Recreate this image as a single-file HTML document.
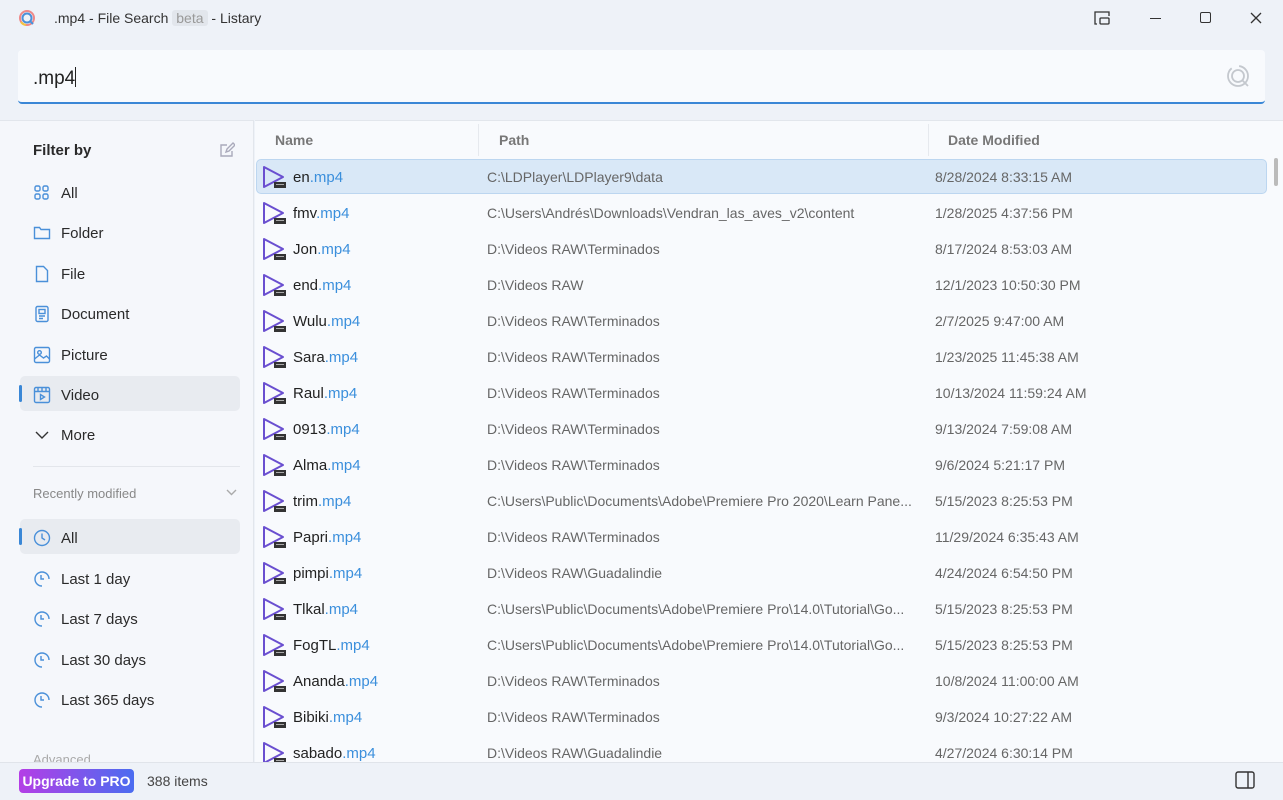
<!DOCTYPE html>
<html><head><meta charset="utf-8"><style>
*{box-sizing:border-box;margin:0;padding:0}
body{width:1283px;height:800px;overflow:hidden;background:#eef2f8;font-family:"Segoe UI","Liberation Sans",sans-serif;color:#1f1f1f;position:relative}
.abs{position:absolute}
.t{font-size:14px;white-space:nowrap}
.side .it{position:absolute;left:33px;font-size:15px;color:#2a2a2a;display:flex;align-items:center;gap:10px;height:20px;margin-top:1px}
.side svg{width:18px;height:18px;fill:none;stroke:#4a90d9;stroke-width:1.4}
.row{position:absolute;left:256px;width:1011px;height:35px;font-size:14px}
.row .ic{position:absolute;left:6px;top:6px}
.row .n{position:absolute;left:37px;top:10px;color:#222;font-size:15px}
.row .n b{font-weight:normal;color:#3b8fdc}
.row .p{position:absolute;left:231px;top:10px;color:#666;font-size:14px}
.row .d{position:absolute;left:679px;top:10px;color:#666;font-size:14px}
</style></head><body>
<svg class="abs" style="left:17px;top:8px" width="20" height="20" viewBox="0 0 20 20"><circle cx="10" cy="10" r="7" fill="none" stroke="#e88" stroke-width="2"/><circle cx="10" cy="10" r="4.5" fill="none" stroke="#4a90d9" stroke-width="2"/><path d="M13 13l3 3" stroke="#4a90d9" stroke-width="2"/><path d="M4 14a7 7 0 0 0 5 3" stroke="#f5c542" stroke-width="2" fill="none"/></svg>
<div class="abs t" style="left:54px;top:10px;font-size:14px;color:#333">.mp4 - File Search <span style="background:#e2e6ec;color:#999;padding:0 4px;border-radius:3px">beta</span> - Listary</div>
<svg class="abs" style="left:1093px;top:10px" width="18" height="16" viewBox="0 0 18 16" fill="none" stroke="#333" stroke-width="1.3"><path d="M4 14H2V2h14v4"/><rect x="7" y="8" width="9" height="6" rx="1"/></svg>
<div class="abs" style="left:1150px;top:18px;width:11px;height:1.3px;background:#333"></div>
<div class="abs" style="left:1200px;top:12px;width:11px;height:11px;border:1.3px solid #333;border-radius:2px"></div>
<svg class="abs" style="left:1250px;top:12px" width="12" height="12" viewBox="0 0 12 12" stroke="#333" stroke-width="1.3"><path d="M1 1l10 10M11 1L1 11"/></svg>
<div class="abs" style="left:18px;top:50px;width:1247px;height:54px;background:#f8fafd;border-radius:4px;border-bottom:2px solid #3a87d6"></div>
<div class="abs" style="left:33px;top:67px;font-size:19px;color:#222">.mp4<span style="display:inline-block;width:1px;height:20px;background:#222;vertical-align:-3px"></span></div>
<svg class="abs" style="left:1226px;top:64px" width="26" height="26" viewBox="0 0 26 26" fill="none" stroke="#c4c8ce" stroke-width="1.8"><circle cx="12" cy="12" r="10" stroke-dasharray="40 8"/><circle cx="12" cy="12" r="6"/><path d="M16 16l6 6"/></svg>
<div class="abs side" style="left:0;top:120px;width:254px;height:642px;background:#f5f7fb;border-top:1px solid #e2e6ec;border-right:1px solid #e2e6ec"></div>
<div class="side">
<div class="abs" style="left:33px;top:142px;font-size:15px;font-weight:bold;color:#2a2a2a">Filter by</div>
<svg class="abs" style="left:219px;top:142px;width:16px;height:16px" viewBox="0 0 16 16"><path d="M13 9v5H2V3h6" stroke="#aab"/><path d="M7 10l1-3 6-6 2 2-6 6z" stroke="#aab"/></svg>
<div class="abs" style="left:20px;top:376px;width:220px;height:35px;background:#e8ebf0;border-radius:5px"></div>
<div class="abs" style="left:19px;top:385px;width:3px;height:17px;background:#3a87d6;border-radius:2px"></div>
<div class="abs" style="left:20px;top:519px;width:220px;height:35px;background:#e8ebf0;border-radius:5px"></div>
<div class="abs" style="left:19px;top:528px;width:3px;height:17px;background:#3a87d6;border-radius:2px"></div>
<div class="it" style="top:182px"><svg viewBox="0 0 18 18"><rect x="2" y="2" width="5" height="5" rx="1.5"/><rect x="10" y="2" width="5" height="5" rx="1.5"/><rect x="2" y="10" width="5" height="5" rx="1.5"/><rect x="10" y="10" width="5" height="5" rx="1.5"/></svg>All</div>
<div class="it" style="top:222px"><svg viewBox="0 0 18 18"><path d="M1.5 4V14.5H16.5V5.5H8L6.5 3.5H1.5z"/></svg>Folder</div>
<div class="it" style="top:263px"><svg viewBox="0 0 18 18"><path d="M3.5 1.5H10.5L14.5 5.5V16.5H3.5z"/></svg>File</div>
<div class="it" style="top:303px"><svg viewBox="0 0 18 18"><rect x="3" y="1.5" width="12" height="15" rx="1.5"/><rect x="6" y="4.5" width="6" height="4"/><path d="M6 11h6M6 13.5h4"/></svg>Document</div>
<div class="it" style="top:344px"><svg viewBox="0 0 18 18"><rect x="1.5" y="1.5" width="15" height="15" rx="1.5"/><circle cx="6.5" cy="6.5" r="1.8"/><path d="M1.5 13l5-4 4 3 3-2 3 3"/></svg>Picture</div>
<div class="it" style="top:384px"><svg viewBox="0 0 18 18"><rect x="1.5" y="1.5" width="15" height="15" rx="1.5"/><path d="M1.5 5.5h15M5 1.5v4M9 1.5v4M13 1.5v4M7.5 8.5v5l4-2.5z"/></svg>Video</div>
<div class="it" style="top:424px"><svg viewBox="0 0 18 18" style="stroke:#333"><path d="M3 6l6 6 6-6"/></svg>More</div>
<div class="abs" style="left:33px;top:466px;width:207px;height:1px;background:#e3e6eb"></div>
<div class="abs" style="left:33px;top:486px;font-size:13px;color:#888">Recently modified</div>
<svg class="abs" style="left:226px;top:489px;width:11px;height:8px" viewBox="0 0 11 8"><path d="M1 1l4.5 4.5L10 1" stroke="#aaa"/></svg>
<div class="it" style="top:527px"><svg viewBox="0 0 18 18"><circle cx="9" cy="9" r="7.5"/><path d="M9 4.5V9l3 2"/></svg>All</div>
<div class="it" style="top:568px"><svg viewBox="0 0 18 18"><path d="M16 9a7 7 0 1 0-7 7"/><path d="M8 5v4h3"/></svg>Last 1 day</div>
<div class="it" style="top:608px"><svg viewBox="0 0 18 18"><path d="M16 9a7 7 0 1 0-7 7"/><path d="M8 5v4h3"/></svg>Last 7 days</div>
<div class="it" style="top:649px"><svg viewBox="0 0 18 18"><path d="M16 9a7 7 0 1 0-7 7"/><path d="M8 5v4h3"/></svg>Last 30 days</div>
<div class="it" style="top:689px"><svg viewBox="0 0 18 18"><path d="M16 9a7 7 0 1 0-7 7"/><path d="M8 5v4h3"/></svg>Last 365 days</div>
<div class="abs" style="left:33px;top:752px;font-size:13px;color:#aaa;height:10px;overflow:hidden">Advanced</div>
</div>
<div class="abs" style="left:255px;top:120px;width:1028px;height:642px;background:#f8fafd;border-top:1px solid #e2e6ec"></div>
<div class="abs" style="left:275px;top:132px;font-size:14px;font-weight:bold;color:#777">Name</div>
<div class="abs" style="left:478px;top:124px;width:1px;height:32px;background:#e6e9ee"></div>
<div class="abs" style="left:499px;top:132px;font-size:14px;font-weight:bold;color:#777">Path</div>
<div class="abs" style="left:928px;top:124px;width:1px;height:32px;background:#e6e9ee"></div>
<div class="abs" style="left:948px;top:132px;font-size:14px;font-weight:bold;color:#777">Date Modified</div>
<div class="abs" style="left:256px;top:159px;width:1011px;height:35px;background:#d9e8f7;border:1px solid #bcd6f0;border-radius:5px"></div>
<div class="abs" style="left:1274px;top:158px;width:4px;height:28px;background:#bbb;border-radius:2px"></div>
<div id="rows"></div>
<script>
var d=[["en","C:\\LDPlayer\\LDPlayer9\\data","8/28/2024 8:33:15 AM"],["fmv","C:\\Users\\Andrés\\Downloads\\Vendran_las_aves_v2\\content","1/28/2025 4:37:56 PM"],["Jon","D:\\Videos RAW\\Terminados","8/17/2024 8:53:03 AM"],["end","D:\\Videos RAW","12/1/2023 10:50:30 PM"],["Wulu","D:\\Videos RAW\\Terminados","2/7/2025 9:47:00 AM"],["Sara","D:\\Videos RAW\\Terminados","1/23/2025 11:45:38 AM"],["Raul","D:\\Videos RAW\\Terminados","10/13/2024 11:59:24 AM"],["0913","D:\\Videos RAW\\Terminados","9/13/2024 7:59:08 AM"],["Alma","D:\\Videos RAW\\Terminados","9/6/2024 5:21:17 PM"],["trim","C:\\Users\\Public\\Documents\\Adobe\\Premiere Pro 2020\\Learn Pane...","5/15/2023 8:25:53 PM"],["Papri","D:\\Videos RAW\\Terminados","11/29/2024 6:35:43 AM"],["pimpi","D:\\Videos RAW\\Guadalindie","4/24/2024 6:54:50 PM"],["Tlkal","C:\\Users\\Public\\Documents\\Adobe\\Premiere Pro\\14.0\\Tutorial\\Go...","5/15/2023 8:25:53 PM"],["FogTL","C:\\Users\\Public\\Documents\\Adobe\\Premiere Pro\\14.0\\Tutorial\\Go...","5/15/2023 8:25:53 PM"],["Ananda","D:\\Videos RAW\\Terminados","10/8/2024 11:00:00 AM"],["Bibiki","D:\\Videos RAW\\Terminados","9/3/2024 10:27:22 AM"],["sabado","D:\\Videos RAW\\Guadalindie","4/27/2024 6:30:14 PM"]];
var h="";d.forEach(function(r,i){var y=159+i*36;h+='<div class="row" style="top:'+y+'px"><svg class="ic" width="24" height="24" viewBox="0 0 24 24"><path d="M2 2L21 12L2 22Z" fill="none" stroke="#6a4fd0" stroke-width="2" stroke-linejoin="round"/><rect x="12" y="17" width="12" height="6" fill="#333"/><rect x="14" y="19" width="8" height="1" fill="#aaa"/></svg><div class="n">'+r[0]+'<b>.mp4</b></div><div class="p">'+r[1]+'</div><div class="d">'+r[2]+'</div></div>'});
document.getElementById("rows").innerHTML=h;
</script>
<div class="abs" style="left:0;top:762px;width:1283px;height:38px;background:#eef2f8;border-top:1px solid #e0e4ea"></div>
<div class="abs" style="left:19px;top:769px;width:115px;height:24px;border-radius:4px;background:linear-gradient(90deg,#b43ee6,#4b6cf0);color:#fff;font-size:14px;font-weight:bold;text-align:center;line-height:24px">Upgrade to PRO</div>
<div class="abs" style="left:147px;top:773px;font-size:14px;color:#444">388 items</div>
<svg class="abs" style="left:1235px;top:771px" width="20" height="18" viewBox="0 0 20 18" fill="none" stroke="#333" stroke-width="1.4"><rect x="1" y="1" width="18" height="16" rx="2"/><path d="M13 1v16"/></svg>
</body></html>
